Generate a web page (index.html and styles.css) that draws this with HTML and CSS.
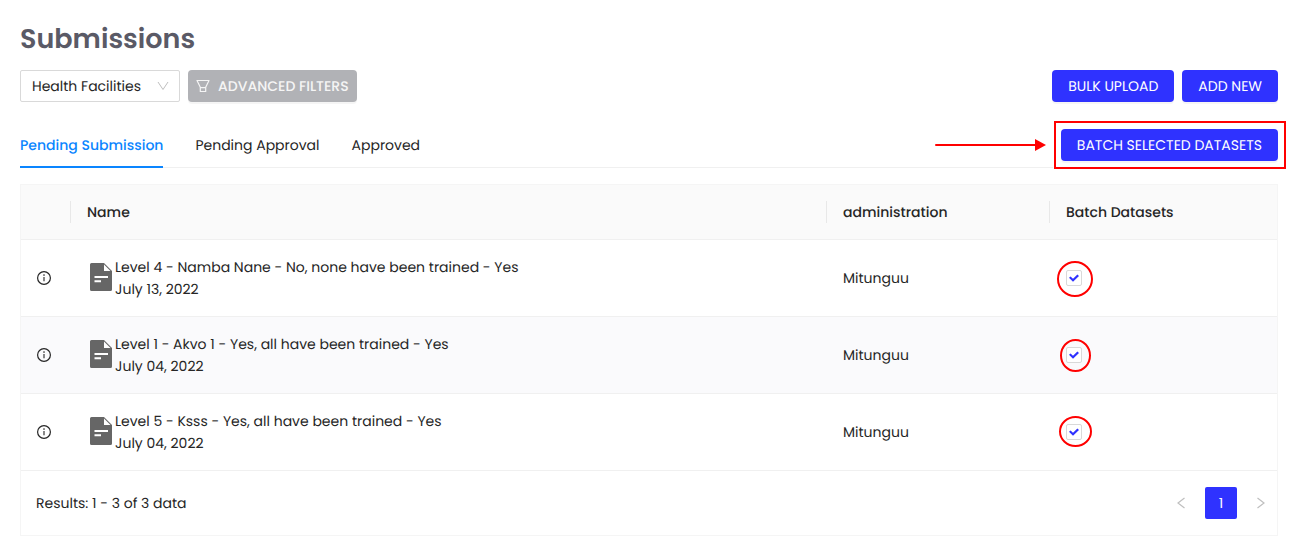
FILE: index.html
```
<!DOCTYPE html>
<html lang="en">
<head>
    <meta charset="UTF-8">
    <meta name="viewport" content="width=device-width, initial-scale=1">
    <title>Submissions</title>
    <link rel="stylesheet" href="styles.css">
</head>
<body>

    <svg class="sprite" aria-hidden="true">
        <symbol id="icon-info" viewBox="0 0 16 16">
            <circle cx="8" cy="8" r="6.4" fill="none" stroke="currentColor" stroke-width="1.2"/>
            <path d="M8 7v4.2" stroke="currentColor" stroke-width="1.1"/>
            <circle cx="8" cy="5.1" r=".8" fill="currentColor"/>
        </symbol>
        <symbol id="icon-file" viewBox="0 0 22 28">
            <path d="M1.500 0H14l8 8v18.500a1.500 1.500 0 0 1-1.500 1.500h-19A1.500 1.500 0 0 1 0 26.500v-25A1.500 1.500 0 0 1 1.500 0z" fill="#666"/>
            <path d="M14 1.500V8h6.500z" fill="#fff"/>
            <path d="M4.500 14H18M4.500 18.200H11" stroke="#fff" stroke-width="2"/>
        </symbol>
    </svg>

    <main id="submissions">
        <h1>Submissions</h1>

        <div class="toolbar">
            <div class="select-wrapper">
                <select id="form-select" aria-label="Form">
                    <option>Health Facilities</option>
                </select>
                <svg class="select-arrow" viewBox="0 0 12 12" aria-hidden="true">
                    <path d="M1 2l5 7.500L11 2" fill="none" stroke="currentColor"/>
                </svg>
            </div>
            <button type="button" class="btn btn-filter">
                <svg viewBox="0 0 14 14" aria-hidden="true">
                    <path d="M1 1.500h12L9.700 8.200v4.300H4.300V8.200zM4.300 8.700h5.400" fill="none" stroke="currentColor" stroke-width="1.200" stroke-linejoin="round"/>
                </svg>
                ADVANCED FILTERS
            </button>
            <div class="toolbar-right">
                <button type="button" class="btn btn-primary">BULK UPLOAD</button>
                <button type="button" class="btn btn-primary">ADD NEW</button>
            </div>
        </div>

        <div class="tabs-row">
            <div class="tabs" role="tablist">
                <button type="button" class="tab tab-active" role="tab" aria-selected="true">Pending Submission</button>
                <button type="button" class="tab" role="tab" aria-selected="false">Pending Approval</button>
                <button type="button" class="tab" role="tab" aria-selected="false">Approved</button>
            </div>
            <div class="highlight">
                <svg class="highlight-arrow" viewBox="0 0 112 12" aria-hidden="true">
                    <path d="M2 6h100" stroke="#f00" stroke-width="2" stroke-linecap="round"/>
                    <path d="M101 0l11 6-11 6z" fill="#f00"/>
                </svg>
                <button type="button" class="btn btn-primary">BATCH SELECTED DATASETS</button>
            </div>
        </div>

        <div class="table-wrapper">
            <table>
                <colgroup>
                    <col class="col-info">
                    <col>
                    <col class="col-administration">
                    <col class="col-batch">
                </colgroup>
                <thead>
                    <tr>
                        <td></td>
                        <th scope="col">Name</th>
                        <th scope="col">administration</th>
                        <th scope="col">Batch Datasets</th>
                    </tr>
                </thead>
                <tbody>
                    <tr>
                        <td><svg class="info" aria-hidden="true"><use href="#icon-info"/></svg></td>
                        <td>
                            <div class="dataset">
                                <svg class="file" aria-hidden="true"><use href="#icon-file"/></svg>
                                <div>
                                    <div>Level 4 - Namba Nane - No, none have been trained - Yes</div>
                                    <div>July 13, 2022</div>
                                </div>
                            </div>
                        </td>
                        <td>Mitunguu</td>
                        <td>
                            <label class="check check-large"><input type="checkbox" aria-label="Batch Level 4 - Namba Nane" checked></label>
                        </td>
                    </tr>
                    <tr>
                        <td><svg class="info" aria-hidden="true"><use href="#icon-info"/></svg></td>
                        <td>
                            <div class="dataset">
                                <svg class="file" aria-hidden="true"><use href="#icon-file"/></svg>
                                <div>
                                    <div>Level 1 - Akvo 1 - Yes, all have been trained - Yes</div>
                                    <div>July 04, 2022</div>
                                </div>
                            </div>
                        </td>
                        <td>Mitunguu</td>
                        <td>
                            <label class="check check-tall"><input type="checkbox" aria-label="Batch Level 1 - Akvo 1" checked></label>
                        </td>
                    </tr>
                    <tr>
                        <td><svg class="info" aria-hidden="true"><use href="#icon-info"/></svg></td>
                        <td>
                            <div class="dataset">
                                <svg class="file" aria-hidden="true"><use href="#icon-file"/></svg>
                                <div>
                                    <div>Level 5 - Ksss - Yes, all have been trained - Yes</div>
                                    <div>July 04, 2022</div>
                                </div>
                            </div>
                        </td>
                        <td>Mitunguu</td>
                        <td>
                            <label class="check check-wide"><input type="checkbox" aria-label="Batch Level 5 - Ksss" checked></label>
                        </td>
                    </tr>
                </tbody>
            </table>
            <div class="table-footer">
                <span>Results: 1 - 3 of 3 data</span>
                <nav class="pagination" aria-label="Pages">
                    <button type="button" class="page" aria-label="Previous page" disabled>
                        <svg viewBox="0 0 12 12" aria-hidden="true"><path d="M9.500 1L3 6l6.500 5" fill="none" stroke="currentColor" stroke-width="1.200"/></svg>
                    </button>
                    <button type="button" class="page page-active">1</button>
                    <button type="button" class="page" aria-label="Next page" disabled>
                        <svg viewBox="0 0 12 12" aria-hidden="true"><path d="M2.500 1L9 6l-6.500 5" fill="none" stroke="currentColor" stroke-width="1.200"/></svg>
                    </button>
                </nav>
            </div>
        </div>
    </main>

</body>
</html>
```
FILE: styles.css
```
* {
    box-sizing: border-box;
}
body {
    margin: 0;
    background: #fff;
    color: #262626;
    font-family: Poppins, Inter, sans-serif;
    font-size: 14px;
    line-height: 22px;
    text-rendering: geometricPrecision;
}
button, select {
    font: inherit;
    color: inherit;
    text-rendering: inherit;
}
.sprite {
    display: none;
}
#submissions {
    padding: 20px 38px 9px 20px;
}
h1 {
    margin: 0 0 10px;
    color: #5a5a66;
    font-size: 27px;
    font-weight: 600;
    line-height: 40px;
}

/* toolbar */
.toolbar {
    display: flex;
    gap: 8px;
}
.toolbar-right {
    display: flex;
    gap: 8px;
    margin-left: auto;
}
.select-wrapper {
    position: relative;
    width: 160px;
}
.select-wrapper select {
    width: 100%;
    height: 32px;
    padding: 0 11px;
    border: 1px solid #d9d9d9;
    border-radius: 2px;
    background: #fff;
    appearance: none;
}
.select-arrow {
    position: absolute;
    top: 10px;
    right: 11px;
    width: 12px;
    height: 12px;
    color: #bfbfbf;
    pointer-events: none;
}
.btn {
    height: 32px;
    padding: 0 16px;
    border: 0;
    border-radius: 4px;
    box-shadow: 0 2px 0 rgba(0, 0, 0, .04);
    white-space: nowrap;
}
.btn-primary {
    background: #2f32ff;
    color: #fff;
}
.btn-filter {
    display: flex;
    align-items: center;
    gap: 8px;
    padding: 0 8px;
    background: #b1b2b6;
    color: #f5f5f5;
    font-weight: 500;
}
.btn-filter svg {
    width: 14px;
    height: 14px;
}

/* tabs */
.tabs-row {
    display: flex;
    align-items: center;
    gap: 8px;
    margin: 20px 0 16px;
}
.tabs {
    display: flex;
    flex: 1;
    gap: 32px;
    border-bottom: 1px solid #f0f0f0;
}
.tab {
    margin-bottom: -1px;
    padding: 12px 0 10px;
    border: 0;
    border-bottom: 2px solid transparent;
    background: none;
}
.tab-active {
    border-color: #0a85ff;
    color: #0a85ff;
    font-weight: 500;
}
.highlight {
    position: relative;
}
.highlight::after {
    content: "";
    position: absolute;
    inset: -8px -8px -8px -7px;
    border: 2px solid #f00;
    pointer-events: none;
}
.highlight-arrow {
    position: absolute;
    top: 10px;
    right: calc(100% + 15px);
    width: 112px;
    height: 12px;
}

/* table */
.table-wrapper {
    border: 1px solid #f5f5f5;
}
table {
    width: 100%;
    border-collapse: separate;
    border-spacing: 0;
    table-layout: fixed;
}
.col-info {
    width: 50px;
}
.col-administration {
    width: 223px;
}
.col-batch {
    width: 227px;
}
th, td {
    padding: 16px;
    border-bottom: 1px solid #f0f0f0;
    text-align: left;
}
td:first-child {
    padding-left: 15px;
}
thead th, thead td {
    position: relative;
    background: #fafafa;
    font-weight: 500;
}
thead th::before {
    content: "";
    position: absolute;
    top: 16px;
    bottom: 16px;
    left: -1px;
    width: 1px;
    background: #e8e8e8;
}
tbody tr:nth-child(even) {
    background: #fafafc;
}
.info {
    display: block;
    width: 16px;
    height: 16px;
}
.dataset {
    display: flex;
    align-items: center;
    gap: 3px;
    padding-left: 3px;
}
.file {
    flex: none;
    width: 22px;
    height: 28px;
    margin-bottom: 2px;
}
.check {
    display: grid;
    position: relative;
    width: 16px;
    height: 16px;
}
.check input {
    display: grid;
    place-content: center;
    width: 16px;
    height: 16px;
    margin: 0;
    border: 1px solid #d9d9d9;
    border-radius: 2px;
    background: #fff;
    appearance: none;
}
.check input:checked::before {
    content: "";
    width: 10px;
    height: 8px;
    background: #2f32ff;
    clip-path: polygon(0 48%, 16% 30%, 40% 58%, 84% 6%, 100% 24%, 40% 96%);
}
.check::after {
    content: "";
    position: absolute;
    border: 2px solid #f00;
    border-radius: 50%;
    pointer-events: none;
}
.check-large::after {
    inset: -9px -11px -11px -9px;
}
.check-tall::after {
    inset: -8px -9px -9px -6px;
}
.check-wide::after {
    inset: -8px -10px -7px -7px;
}
.table-footer {
    display: flex;
    align-items: center;
    justify-content: space-between;
    padding: 16px 0 16px 15px;
}
.pagination {
    display: flex;
    gap: 8px;
}
.page {
    display: grid;
    place-items: center;
    width: 32px;
    height: 32px;
    padding: 0;
    border: 0;
    border-radius: 2px;
    background: none;
    color: #bfbfbf;
}
.page svg {
    width: 12px;
    height: 12px;
}
.page-active {
    background: #2f32ff;
    color: #fff;
}
```
